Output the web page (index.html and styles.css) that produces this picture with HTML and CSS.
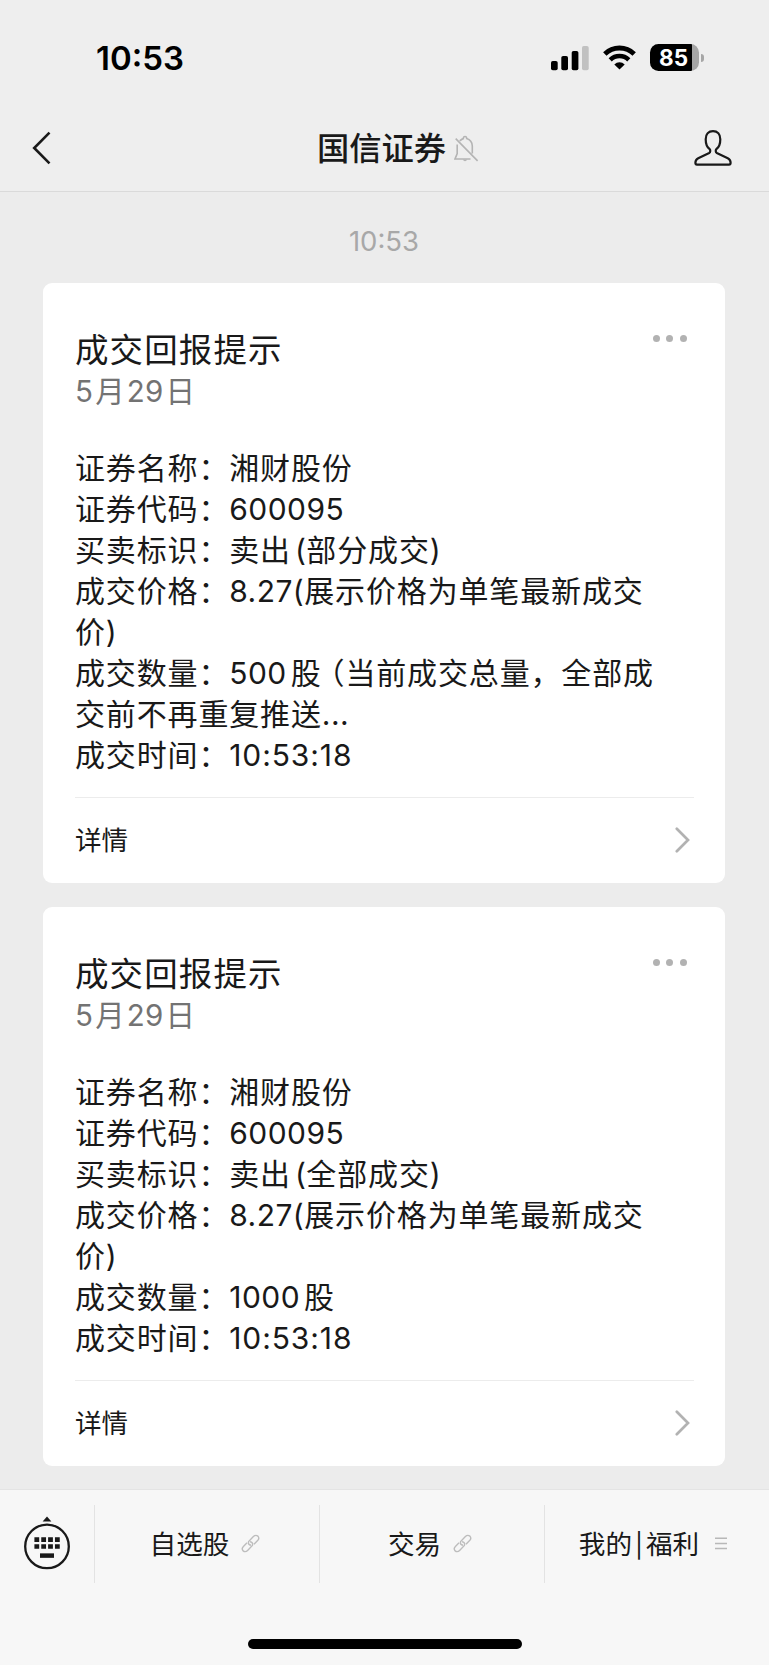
FILE: index.html
```html
<!DOCTYPE html>
<html lang="zh-CN">
<head>
    <meta charset="UTF-8">
    <meta name="viewport" content="width=device-width, initial-scale=1.0">
    <title>国信证券</title>
    <link rel="stylesheet" href="styles.css">
</head>
<body>

    <header class="top">
        <div class="status-bar">
            <span class="clock">10:53</span>
            <div class="status-icons">
                <svg class="signal" width="39" height="26" viewBox="0 0 39 26">
                    <rect x="0" y="16" width="6.7" height="9.2" rx="1.8"/>
                    <rect x="10.3" y="11" width="6.7" height="14.2" rx="1.8"/>
                    <rect x="20.7" y="6" width="6.7" height="19.2" rx="1.8"/>
                    <rect x="31" y="1" width="6.7" height="24.2" rx="1.8" fill="#c1c1c1"/>
                </svg>
                <svg class="wifi" width="33" height="25" viewBox="0 0 33 25">
                    <path d="M1.8 9A21 21 0 0 1 31.2 9" fill="none" stroke="#000" stroke-width="4.8"/>
                    <path d="M7.2 14.9A13.3 13.3 0 0 1 25.8 14.9" fill="none" stroke="#000" stroke-width="4.5"/>
                    <path d="M16.5 24.6L11.3 19.4A7.6 7.6 0 0 1 21.7 19.4Z"/>
                </svg>
                <div class="battery">85</div>
                <div class="battery-tip"></div>
            </div>
        </div>

        <nav class="nav-bar">
            <svg class="back" width="20" height="34" viewBox="0 0 20 34">
                <path d="M17.5 1.7L2.2 17L17.5 32.3" fill="none" stroke="#191919" stroke-width="2.6"/>
            </svg>
            <h1 class="nav-title">国信证券
                <svg class="bell" width="25" height="28" viewBox="0 0 25 28">
                    <path d="M5.7 5.8Q8 3.9 9.3 3.6Q9.3 1.5 11 1.5Q12.7 1.5 12.7 3.6Q18 5.2 18.3 11V18.5M3.2 9.5V18.5L1 24H16.5M1.7 3.6L23.6 25.9" fill="none" stroke="#b4b4b4" stroke-width="1.6"/>
                    <path d="M8.6 24.6H13.4Q11 28 8.6 24.6Z" fill="#b4b4b4"/>
                </svg>
            </h1>
            <svg class="person" width="38" height="36" viewBox="0 0 38 36">
                <path d="M19 1.2C23.4 1.2 26.3 4.2 26.3 9.2C26.3 14.2 25.3 16.8 22.6 18.9C21.4 20 21.4 22.2 22.8 23L33.8 28.2C36 29.3 36.6 30.4 36.6 32.8Q36.6 34.6 35 34.6H3Q1.4 34.6 1.4 32.8C1.4 30.4 2 29.3 4.2 28.2L15.2 23C16.6 22.2 16.6 20 15.4 18.9C12.7 16.8 11.7 14.2 11.7 9.2C11.7 4.2 14.6 1.2 19 1.2Z" fill="none" stroke="#191919" stroke-width="2.2" stroke-linejoin="round"/>
            </svg>
        </nav>
    </header>

    <main class="chat">
        <div class="chat-time">10:53</div>

        <section class="card">
            <div class="card-head">
                <div>
                    <h2 class="card-title">成交回报提示</h2>
                    <p class="card-date">5<i></i>月<i></i>29<i></i>日</p>
                </div>
                <div class="more"><span></span><span></span><span></span></div>
            </div>
            <div class="card-body">
                <p>证券名称：湘财股份</p>
                <p>证券代码：<b>600095</b></p>
                <p>买卖标识：卖出<i></i><b>(</b>部分成交<b>)</b></p>
                <p>成交价格：<b>8.27(</b>展示价格为单笔最新成交<br>价<b>)</b></p>
                <p>成交数量：<b>500</b><i></i>股<span class="paren">（</span>当前成交总量，全部成<br>交前不再重复推送<b>...</b></p>
                <p>成交时间：<b class="time">10:53:18</b></p>
            </div>
            <div class="card-foot">
                <span>详情</span>
                <svg width="15" height="26" viewBox="0 0 15 26">
                    <path d="M1.8 1.8L13 13L1.8 24.2" fill="none" stroke="#b2b2b2" stroke-width="2.7" stroke-linecap="round"/>
                </svg>
            </div>
        </section>

        <section class="card">
            <div class="card-head">
                <div>
                    <h2 class="card-title">成交回报提示</h2>
                    <p class="card-date">5<i></i>月<i></i>29<i></i>日</p>
                </div>
                <div class="more"><span></span><span></span><span></span></div>
            </div>
            <div class="card-body">
                <p>证券名称：湘财股份</p>
                <p>证券代码：<b>600095</b></p>
                <p>买卖标识：卖出<i></i><b>(</b>全部成交<b>)</b></p>
                <p>成交价格：<b>8.27(</b>展示价格为单笔最新成交<br>价<b>)</b></p>
                <p>成交数量：<b>1000</b><i></i>股</p>
                <p>成交时间：<b class="time">10:53:18</b></p>
            </div>
            <div class="card-foot">
                <span>详情</span>
                <svg width="15" height="26" viewBox="0 0 15 26">
                    <path d="M1.8 1.8L13 13L1.8 24.2" fill="none" stroke="#b2b2b2" stroke-width="2.7" stroke-linecap="round"/>
                </svg>
            </div>
        </section>
    </main>

    <footer class="bottom">
        <div class="menu">
            <div class="menu-key">
                <svg width="46" height="54" viewBox="0 0 46 54">
                    <path d="M18.6 5.4L23 .6L27.4 5.4Z" fill="#191919"/>
                    <circle cx="23" cy="30.4" r="21.8" fill="none" stroke="#191919" stroke-width="2.3"/>
                    <path d="M10.4 23.6H36M10.4 30.5H36" stroke="#191919" stroke-width="4.7" stroke-dasharray="4.8 2.05"/>
                    <path d="M16 39.6H30" stroke="#191919" stroke-width="4.5"/>
                </svg>
            </div>
            <div class="menu-item">
                <span>自选股</span>
                <svg class="link" width="19" height="19" viewBox="0 0 19 19">
                    <path d="M10 11.2Q6.6 10.6 7.6 7.6L12.4 2.6Q14.6 .4 16.9 2.1Q18.8 4.4 16.6 6.6L13 10.2M9 7.8Q12.4 8.4 11.4 11.4L6.6 16.4Q4.4 18.6 2.1 16.9Q.2 14.6 2.4 12.4L6 8.8" fill="none" stroke="#bdbdbd" stroke-width="1.4"/>
                </svg>
            </div>
            <div class="menu-item">
                <span>交易</span>
                <svg class="link" width="19" height="19" viewBox="0 0 19 19">
                    <path d="M10 11.2Q6.6 10.6 7.6 7.6L12.4 2.6Q14.6 .4 16.9 2.1Q18.8 4.4 16.6 6.6L13 10.2M9 7.8Q12.4 8.4 11.4 11.4L6.6 16.4Q4.4 18.6 2.1 16.9Q.2 14.6 2.4 12.4L6 8.8" fill="none" stroke="#bdbdbd" stroke-width="1.4"/>
                </svg>
            </div>
            <div class="menu-item menu-more">
                <span>我的<em>|</em>福利</span>
                <svg class="list" width="12" height="13" viewBox="0 0 12 13">
                    <path d="M0 1.2H12M0 6.4H12M0 11.6H12" stroke="#b8b8b8" stroke-width="1.5"/>
                </svg>
            </div>
        </div>
        <div class="home-bar"></div>
    </footer>

</body>
</html>
```
FILE: styles.css
```css
* {
    box-sizing: border-box;
}
body {
    margin: 0;
    width: 769px;
    height: 1665px;
    overflow: hidden;
    display: flex;
    flex-direction: column;
    background: #ececec;
    color: #191919;
    font-family: Inter, "Noto Sans CJK SC", sans-serif;
}
h1, h2, p {
    margin: 0;
    font-weight: 400;
}
svg {
    display: block;
    flex: none;
}

/* top */
.top {
    flex: none;
    height: 192px;
    background: #eeeeee;
    border-bottom: 1px solid #dadada;
}
.status-bar {
    height: 115px;
    padding: 0 65px 0 96px;
    display: flex;
    align-items: center;
    justify-content: space-between;
    color: #000;
}
.clock {
    font-size: 33px;
    font-weight: 600;
}
.status-icons {
    display: flex;
    align-items: center;
}
.wifi {
    margin-left: 13px;
}
.battery {
    width: 49px;
    height: 27px;
    margin-left: 14px;
    padding-right: 2px;
    border-radius: 8.5px;
    background: linear-gradient(to right, #000 42px, #a6a6a6 42px);
    color: #fff;
    font-size: 22.5px;
    font-weight: 700;
    line-height: 28px;
    text-align: center;
}
.battery-tip {
    width: 3px;
    height: 8px;
    margin-left: 2px;
    border-radius: 0 3px 3px 0;
    background: #a6a6a6;
}
.nav-bar {
    height: 66px;
    padding: 0 37px 0 32px;
    display: flex;
    align-items: center;
    justify-content: space-between;
}
.nav-title {
    display: flex;
    align-items: center;
    font-size: 32.3px;
    font-weight: 500;
    line-height: 40px;
    margin-left: 50px;
    padding-top: 1px;
}
.bell {
    margin-left: 8px;
}

/* messages */
.chat {
    flex: 1;
    min-height: 0;
    padding: 0 44px 0 43px;
}
.chat-time {
    height: 91px;
    padding-top: 33px;
    line-height: 33px;
    font-size: 27.5px;
    text-align: center;
    color: #a8a8a8;
}
.card {
    margin-bottom: 23.5px;
    padding: 47px 31px 0 32px;
    background: #fff;
    border-radius: 9px;
}
.card-head {
    display: flex;
    justify-content: space-between;
}
.card-title {
    font-size: 33.5px;
    letter-spacing: 1.1px;
    line-height: 41px;
}
.card-date {
    font-size: 29.5px;
    letter-spacing: 0.2px;
    line-height: 41px;
    color: #737373;
}
.card i {
    display: inline-block;
    width: 4px;
}
.card .card-date i {
    width: 2px;
}
.more {
    display: flex;
    gap: 6.7px;
    padding: 5px 7px 0 0;
}
.more span {
    width: 7px;
    height: 7px;
    border-radius: 50%;
    background: #b2b2b2;
}
.card-body {
    margin-top: 36px;
    padding-bottom: 21px;
    font-size: 30px;
    letter-spacing: 0.85px;
    line-height: 41px;
    white-space: nowrap;
    border-bottom: 1px solid #ececec;
}
.card-body b {
    font-weight: 400;
    letter-spacing: 0.45px;
}
.card-body .time {
    letter-spacing: 0.9px;
}
.paren {
    font-feature-settings: "halt";
    margin-left: 8px;
}
.card-foot {
    height: 85px;
    padding: 0 4px 1px 0;
    display: flex;
    align-items: center;
    justify-content: space-between;
    font-size: 26.5px;
}
.card-foot span {
    padding-bottom: 3px;
}

/* bottom menu */
.bottom {
    flex: none;
    height: 176px;
    padding-top: 15px;
    background: #f7f7f7;
    border-top: 1px solid #e4e4e4;
}
.menu {
    height: 78px;
    display: grid;
    grid-template-columns: 94px 225px 225px 225px;
}
.menu-key {
    padding: 11px 0 0 24px;
}
.menu-item {
    display: flex;
    align-items: center;
    justify-content: center;
    gap: 12px;
    padding: 0 4px 2px 0;
    border-left: 1px solid #e3e3e3;
    font-size: 26.6px;
}
.menu-item span {
    padding-bottom: 2px;
}
.menu-item em {
    font-style: normal;
    font-size: 24px;
    margin: 0 3px;
}
.menu-more {
    padding-right: 8px;
}
.list {
    margin-left: 4px;
}
.home-bar {
    width: 274px;
    height: 10px;
    margin: 56px auto 0;
    border-radius: 5px;
    background: #000;
}
```
